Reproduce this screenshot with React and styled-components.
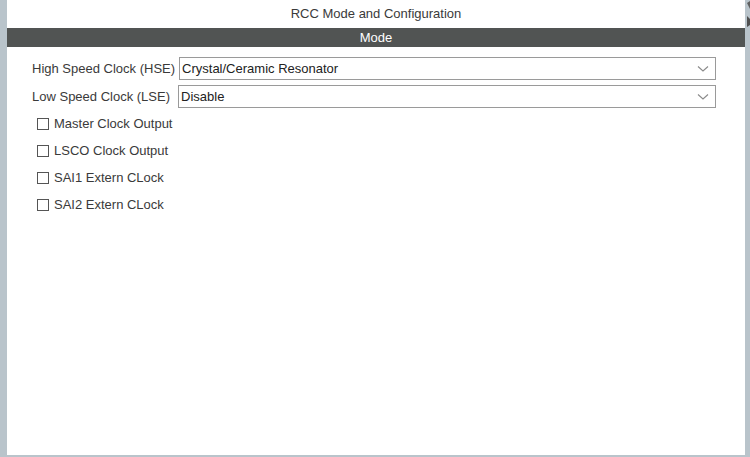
import React from "react";
import styled, { createGlobalStyle } from "styled-components";

const Global = createGlobalStyle`
  html, body { margin: 0; padding: 0; }
  body {
    background: #b9c4cb;
    font-family: "Liberation Sans", Arial, sans-serif;
    font-size: 13px;
    color: #333;
    overflow: hidden;
  }
`;

const Screen = styled.div`
  position: relative;
  width: 750px;
  height: 457px;
  display: flex;
  padding-left: 7px;
  box-sizing: border-box;
`;

const Panel = styled.div`
  width: 738px;
  height: 455px;
  background: #fff;
  display: flex;
  flex-direction: column;
`;

const Title = styled.div`
  height: 28px;
  line-height: 28px;
  text-align: center;
  color: #3a3a3a;
  font-size: 13px;
`;

const SectionBar = styled.div`
  height: 19px;
  line-height: 19px;
  background: #515453;
  color: #fff;
  text-align: center;
  font-size: 13px;
`;

const Form = styled.div`
  display: grid;
  grid-template-columns: auto 1fr;
  column-gap: 4px;
  row-gap: 5px;
  align-items: center;
  padding: 10px 29px 0 25px;
`;

const Label = styled.label`
  color: #3a3a3a;
  white-space: nowrap;
`;

const SelectBox = styled.div`
  height: 23px;
  box-sizing: border-box;
  border: 1px solid #9a9a9a;
  display: flex;
  align-items: center;
  justify-content: space-between;
  padding: 0 4px 0 2px;
  margin-left: ${(p) => p.$shift || 0}px;
  color: #222;
`;

const Chevron = () => (
  <svg width="12" height="8" viewBox="0 0 12 8">
    <path d="M1 1.5 L6 6 L11 1.5" fill="none" stroke="#8a8a8a" strokeWidth="1.1" />
  </svg>
);

const ChevronWrap = styled.span`
  display: flex;
  margin-right: 2px;
`;

const CheckList = styled.div`
  display: flex;
  flex-direction: column;
  padding: 2px 0 0 30px;
`;

const CheckRow = styled.div`
  height: 27px;
  display: flex;
  align-items: center;
  gap: 5px;
  color: #3a3a3a;
`;

const Box = styled.span`
  width: 12px;
  height: 12px;
  box-sizing: border-box;
  border: 1px solid #555;
  background: #fff;
`;

const EdgeTab = styled.svg`
  position: absolute;
  right: 0;
  top: 0;
`;

const selects = [
  { label: "High Speed Clock (HSE)", value: "Crystal/Ceramic Resonator", shift: 0 },
  { label: "Low Speed Clock (LSE)", value: "Disable", shift: -1 },
];

const checks = [
  "Master Clock Output",
  "LSCO Clock Output",
  "SAI1 Extern CLock",
  "SAI2 Extern CLock",
];

export default function App() {
  return (
    <>
      <Global />
      <Screen>
        <Panel>
          <Title>RCC Mode and Configuration</Title>
          <SectionBar>Mode</SectionBar>
          <Form>
            {selects.map((s) => (
              <React.Fragment key={s.label}>
                <Label>{s.label}</Label>
                <SelectBox $shift={s.shift}>
                  <span>{s.value}</span>
                  <ChevronWrap>
                    <Chevron />
                  </ChevronWrap>
                </SelectBox>
              </React.Fragment>
            ))}
          </Form>
          <CheckList>
            {checks.map((c) => (
              <CheckRow key={c}>
                <Box />
                <span>{c}</span>
              </CheckRow>
            ))}
          </CheckList>
        </Panel>
        <EdgeTab width="5" height="28" viewBox="0 0 5 28">
          <path d="M2 3 L5 1 L5 9 Z" fill="#606060" />
          <path d="M2 16 L5 19 L5 25 L2 27 Z" fill="#505050" />
        </EdgeTab>
      </Screen>
    </>
  );
}
